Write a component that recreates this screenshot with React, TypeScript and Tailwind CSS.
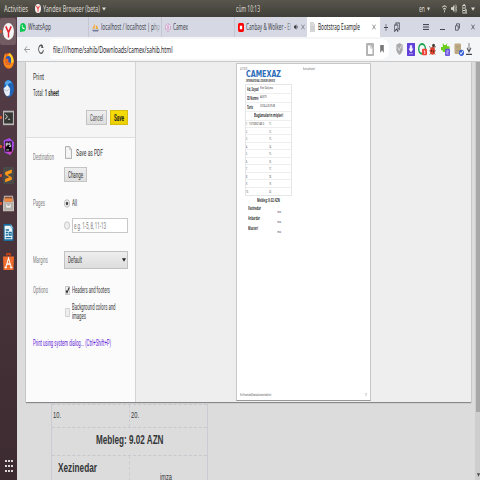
import React, { useLayoutEffect, useRef, useState } from "react";

// Condenses a single line of text to the width of its box.
function Fit({ className = "", children }: { className?: string; children: React.ReactNode }) {
  const box = useRef<HTMLDivElement>(null);
  const inner = useRef<HTMLSpanElement>(null);
  const [scale, setScale] = useState(0.56);
  useLayoutEffect(() => {
    if (box.current && inner.current && inner.current.offsetWidth) {
      const natural = parseFloat(getComputedStyle(inner.current).width);
      const wanted = parseFloat(getComputedStyle(box.current).width);
      setScale(wanted / natural);
    }
  }, []);
  return (
    <div ref={box} className={`shrink-0 whitespace-nowrap ${className}`}>
      <span ref={inner} className="inline-block origin-left align-top" style={{ transform: `scaleX(${scale})` }}>
        {children}
      </span>
    </div>
  );
}

function Ico({ className = "", box = "0 0 20 20", children }: { className?: string; box?: string; children: React.ReactNode }) {
  return (
    <svg className={`block shrink-0 ${className}`} viewBox={box} preserveAspectRatio="none" fill="none">
      {children}
    </svg>
  );
}

function TopBar() {
  return (
    <div className="flex h-[17px] shrink-0 items-center bg-linear-to-b from-[#58564c] to-[#3f3e39] text-[8.5px] leading-[12px] text-[#dfdbd2]">
      <Fit className="ml-[4px] w-[24px]">Activities</Fit>
      <Ico className="ml-[7px] h-[9px] w-[6px]">
        <ellipse cx="10" cy="10" rx="10" ry="10" fill="#f4f0ee" />
        <path d="M5 4l5 7v6M15 4l-5 7" stroke="#e33" strokeWidth="3" />
      </Ico>
      <Fit className="ml-[2px] w-[57px]">Yandex Browser (beta)</Fit>
      <Ico className="ml-[2px] h-[4px] w-[4px]"><path d="M0 2h20L10 19z" fill="#dfdbd2" /></Ico>
      <Fit className="ml-[130px] w-[24px]">cüm 10:13</Fit>
      <Fit className="ml-[159px] w-[6px]">en</Fit>
      <Ico className="ml-[2px] h-[4px] w-[3px]"><path d="M0 2h20L10 19z" fill="#dfdbd2" /></Ico>
      <Ico className="ml-[12px] h-[8px] w-[5px]">
        <path d="M1 6q9-8 18 0M5 11q5-5 10 0M10 12v7" stroke="#d4d0c8" strokeWidth="3" />
      </Ico>
      <Ico className="ml-[4px] h-[9px] w-[6px]">
        <path d="M0 7h5l6-6v18l-6-6H0z" fill="#d8d5cd" />
        <path d="M13 5q4 5 0 10M16 1q6 9 0 18" stroke="#c8c4bc" strokeWidth="2" />
      </Ico>
      <Ico className="ml-[5px] h-[10px] w-[5px]">
        <path d="M3 3h10v15H3zM6 1h5M4 8h8M4 13h8M15 12h4v6h-4" stroke="#d8d5cd" strokeWidth="2.4" />
      </Ico>
      <Ico className="ml-[4px] h-[4px] w-[4px]"><path d="M0 2h20L10 19z" fill="#dfdbd2" /></Ico>
    </div>
  );
}

function DockItem({ running = false, active = false, children }: { running?: boolean; active?: boolean; children: React.ReactNode }) {
  return (
    <div className="flex h-[28.75px] items-center">
      <div className={`flex h-[27px] w-[16px] items-center rounded-[2px] ${active ? "bg-[#715d62]" : ""}`}>
        <div className={`h-[3px] w-[2px] rounded-r-[1px] ${running ? "bg-[#d9532a]" : ""}`} />
        <Ico className="ml-[1px] h-[17px] w-[11px]">{children}</Ico>
      </div>
    </div>
  );
}

function Dock() {
  return (
    <div className="flex w-[17px] shrink-0 flex-col bg-linear-to-b from-[#563f48] via-[#49333b] to-[#3c2b31]">
      <DockItem running active>
        <ellipse cx="10" cy="10" rx="10" ry="10" fill="#f5f3f3" />
        <path d="M5 4l5 7v6M15 4l-5 7" stroke="#e3202b" strokeWidth="2.6" />
      </DockItem>
      <DockItem>
        <circle cx="10" cy="10.5" r="9.3" fill="#f0611c" />
        <path d="M2 6L4 1l2 4q5-5 9-1 6 4 4 10-3 6-9 5Q2 18 1 11z" fill="#ff8a16" />
        <path d="M12 1q8 5 7 11l-4 1q1-7-5-9z" fill="#ffd22c" />
        <circle cx="9.5" cy="10" r="5.2" fill="#2b55b5" />
        <path d="M3 9q4-3 7 0-2 3 4 4-4 4-8 1z" fill="#f46a1d" />
      </DockItem>
      <DockItem>
        <ellipse cx="10.5" cy="10" rx="9.5" ry="10" fill="#1e64b8" />
        <path d="M3 3q7-6 14 1-8-2-10 5z" fill="#54a6e8" />
        <path d="M1 10l7-4 5 4-1 8-5 1q-5-2-6-9z" fill="#e9eef4" />
        <path d="M2 11l5 2 5-3" stroke="#98abc5" />
      </DockItem>
      <DockItem running>
        <rect x="0" y="2" width="20" height="17" fill="#b9b8b5" />
        <rect x="2" y="4" width="16" height="13" fill="#353735" />
        <path d="M4 6l4 3-4 3M9 12h4" stroke="#ccc" strokeWidth="1.2" />
      </DockItem>
      <DockItem running>
        <path d="M1 3L12 0l8 5-1 9-6 6-10-3z" fill="#a64be9" />
        <path d="M0 11l8-8 10 12-5 5z" fill="#d346bb" />
        <rect x="4" y="4" width="12" height="12" fill="#0d0910" />
        <path d="M6 10V6h3v2H6M14 6h-3v2h3v2h-3M6 14h5" stroke="#fff" strokeWidth="1.1" />
      </DockItem>
      <DockItem running>
        <rect width="20" height="20" rx="2" fill="#4a4b48" />
        <path d="M16 3v4L8 9l8 3v3L4 18v-4l8-2-8-3V6z" fill="#ff9818" />
      </DockItem>
      <DockItem running>
        <path d="M2 1h16l2 8v10H0V9z" fill="#c8c3bd" />
        <path d="M3 2h14v6H3z" fill="#8b5138" />
        <path d="M3 4h14v4H3z" fill="#f18c43" />
        <path d="M2 9h16v9H2z" fill="#b4b0aa" />
        <path d="M7 11v3h6v-3" stroke="#fff" strokeWidth="1.5" />
      </DockItem>
      <DockItem>
        <path d="M1 0h13l5 5v15H1z" fill="#166d9c" />
        <path d="M3 2h10l4 4v12H3z" fill="#eef6fa" />
        <path d="M14 0v5h5" fill="#8ec8e5" />
        <path d="M5 7h6M5 10h4M5 13h4M5 16h10M11 10h4v3h-4z" stroke="#166d9c" strokeWidth="1.7" />
      </DockItem>
      <DockItem>
        <path d="M7 4V1h6v3" stroke="#d24416" strokeWidth="2" />
        <path d="M0 4h20l-1 16H1z" fill="#ee6c2d" />
        <path d="M5 17l5-11 5 11M7 13h6M3 17h4M13 17h4" stroke="#fff" strokeWidth="1.7" />
      </DockItem>
      <div className="mt-auto mb-[8px] ml-[5px] grid w-[8px] grid-cols-3 gap-x-[1.5px] gap-y-[3px]">
        {Array.from({ length: 9 }, (_, i) => (
          <div key={i} className="h-[2px] w-[1.5px] bg-[#dcd8da]" />
        ))}
      </div>
    </div>
  );
}

const cross = <path d="M2 2l16 16M18 2L2 18" stroke="currentColor" strokeWidth="2.8" />;

function Tabs() {
  return (
    <div className="flex h-[20px] shrink-0 items-center bg-[#d6d9e4] text-[8px] leading-[12px] text-[#41434a]">
      <div className="flex h-full w-[72px] items-center border-r border-[#c4c7d1]">
        <Ico className="ml-[3px] h-[9px] w-[6px]">
          <path d="M0 20V9Q1 0 10 0t10 10q-1 10-10 9z" fill="#0bc551" />
          <path d="M6 5q-1 9 9 9v-3l-3-1-2 1-2-3 1-1-1-3z" fill="#fff" />
        </Ico>
        <Fit className="ml-[2px] w-[23px]">WhatsApp</Fit>
      </div>
      <div className="flex h-full w-[73px] items-center border-r border-[#c4c7d1]">
        <Ico className="ml-[3px] h-[9px] w-[7px]">
          <path d="M8 1v12H1zM11 4q6 4 7 10l-7-1z" fill="#f4ac35" />
          <path d="M0 15h20l-3 4H3z" fill="#777e9c" />
        </Ico>
        <Fit className="ml-[2px] w-[59px]">localhost / localhost | p<span className="text-[#777a84]">h</span><span className="text-[#a5a8b3]">p</span></Fit>
      </div>
      <div className="flex h-full w-[73px] items-center border-r border-[#c4c7d1]">
        <Ico className="ml-[3px] h-[9px] w-[6px]">
          <circle cx="10" cy="10" r="8" fill="#f4e8f3" stroke="#bd7ab4" strokeWidth="2" strokeDasharray="7 2" />
          <path d="M10 5v10" stroke="#a963b1" strokeWidth="2" />
        </Ico>
        <Fit className="ml-[2px] w-[15px]">Camex</Fit>
      </div>
      <div className="flex h-full w-[72px] items-center">
        <Ico className="ml-[3px] h-[9px] w-[6px]">
          <rect width="20" height="20" rx="5" fill="#f00" />
          <path d="M6 6h8v8H6z" fill="#fff" />
        </Ico>
        <Fit className="ml-[2px] w-[45px]">Canbay &amp; Wolker - <span className="text-[#777a84]">E</span><span className="text-[#a5a8b3]">l</span></Fit>
        <Ico className="ml-[3px] h-[6px] w-[4px]"><path d="M0 6h5l7-5v18l-7-5H0z" fill="#41434a" /><path d="M16 6v8" stroke="#41434a" strokeWidth="3" /></Ico>
        <Ico className="ml-[3px] h-[6px] w-[4px] text-[#73757d]">{cross}</Ico>
      </div>
      <div className="flex h-full w-[73px] items-center bg-white text-[#222]">
        <Ico className="ml-[3px] h-[10px] w-[5px]">
          <path d="M1 1h12l6 5v13H1z" fill="#ddd" stroke="#aaa" />
          <path d="M4 9h12M4 12h12M4 15h12" stroke="#aaa" />
        </Ico>
        <Fit className="ml-[3px] w-[42px]">Bootstrap Example</Fit>
        <Ico className="ml-[12px] h-[6px] w-[4px] text-[#777]">{cross}</Ico>
      </div>
      <Ico className="ml-[4px] h-[7px] w-[4px]"><path d="M10 0v20M0 10h20" stroke="#444750" strokeWidth="3" /></Ico>
      <Ico className="ml-[6px] h-[10px] w-[6px]">
        <path d="M6 5V2h12v13l-3-2M2 6h11v13l-5-5-6 5z" stroke="#444750" strokeWidth="2.2" />
      </Ico>
      <Ico className="ml-[23px] h-[6px] w-[6px]"><path d="M0 2h20M0 10h20M0 18h20" stroke="#33353b" strokeWidth="3.2" /></Ico>
      <div className="mt-[4px] ml-[11px] h-[1px] w-[5px] bg-[#444750]" />
      <Ico className="ml-[10px] h-[8px] w-[5px]"><path d="M6 6V2h12v11h-4M2 7h11v11H2z" stroke="#444750" strokeWidth="2.4" /></Ico>
      <Ico className="ml-[11px] h-[6px] w-[4px] text-[#444750]">{cross}</Ico>
    </div>
  );
}

function Toolbar() {
  return (
    <div className="flex h-[24px] shrink-0 items-center bg-[#f5f6f8]">
      <Ico className="ml-[7px] h-[7px] w-[6px]"><path d="M10 1L2 10l8 9M2 10h18" stroke="#888b90" strokeWidth="2.5" /></Ico>
      <Ico className="ml-[8px] h-[10px] w-[6px]">
        <path d="M16 5A8 8 0 1 0 18 12" stroke="#55585d" strokeWidth="2.8" />
        <path d="M11 0v8h8z" fill="#55585d" />
      </Ico>
      <div className="ml-[6px] flex h-[20px] w-[339px] items-center rounded-r-[7px] rounded-l-[3px] bg-white">
        <Fit className="ml-[3px] w-[119.5px] text-[8.5px] leading-[13px] text-[#26232a]">file:///home/sahib/Downloads/camex/sahib.html</Fit>
        <Ico className="ml-[193px] h-[13px] w-[8px]">
          <rect width="20" height="20" rx="2" fill="#b4b4b4" />
          <path d="M5 4h7l4 4v9H5z" fill="#fff" />
          <path d="M12 4v4h4" stroke="#b4b4b4" strokeWidth="1.4" />
        </Ico>
        <Ico className="ml-[6px] h-[8px] w-[4px]"><path d="M1 0h18v20l-9-7-9 7z" fill="#77777a" /></Ico>
      </div>
      <Ico className="ml-[7px] h-[12px] w-[7px]">
        <path d="M10 0l9 3v9q-2 5-9 8-7-3-9-8V3z" fill="#aaa" />
        <path d="M5 7l4 5 7-8" stroke="#ddd" strokeWidth="2" />
      </Ico>
      <Ico className="ml-[4px] h-[13px] w-[8px]">
        <rect width="20" height="20" rx="1" fill="#6040d8" />
        <path d="M8 4h4v5h3l-5 5-5-5h3zM5 16.5h10" fill="#fff" stroke="#fff" />
      </Ico>
      <Ico className="ml-[3px] h-[13px] w-[9px]">
        <circle cx="9" cy="9" r="7.5" stroke="#17a34b" strokeWidth="3" />
        <rect x="9" y="9" width="11" height="10" rx="2" fill="#ef4136" />
        <path d="M13 12h2v5" stroke="#fff" strokeWidth="1.4" />
      </Ico>
      <Ico className="ml-[2px] h-[13px] w-[7px]">
        <path d="M1 5l5 4M19 5l-5 4M0 12h20M2 18l5-4M18 18l-5-4" stroke="#705146" strokeWidth="1.4" />
        <ellipse cx="10" cy="12" rx="7" ry="6" fill="#e0402a" />
        <ellipse cx="13" cy="4" rx="4" ry="3" fill="#4a3935" />
        <circle cx="7" cy="12" r="1.8" fill="#60261f" />
        <circle cx="13" cy="13" r="1.8" fill="#60261f" />
      </Ico>
      <Ico className="ml-[5px] h-[13px] w-[9px]">
        <path d="M4 0l3 3h4l3-3-1 5h6v5h-3v4H4v-3H0V6h4z" fill="#6bd01b" />
        <rect x="9" y="9" width="11" height="11" rx="2" fill="#6b55df" />
        <path d="M12 12h4v2h-3v3h4" stroke="#d5ccff" strokeWidth="1.3" />
      </Ico>
      <Ico className="ml-[4px] h-[14px] w-[10px]">
        <rect x="1" y="2" width="13" height="15" rx="2" fill="#bca884" />
        <path d="M4 7h7M4 12h7" stroke="#a5946f" />
        <ellipse cx="15" cy="15.5" rx="5" ry="4.5" fill="#315bd3" />
        <path d="M12 15l2 2 4-4" stroke="#fff" strokeWidth="1.5" />
      </Ico>
      <Ico className="ml-[2px] h-[12px] w-[6px]"><path d="M10 0v14M3 8l7 7 7-7M0 19h20" stroke="#44474d" strokeWidth="2.2" /></Ico>
    </div>
  );
}

function Label({ children, className }: { children: React.ReactNode; className: string }) {
  return <Fit className={`text-[#7d7d7d] ${className}`}>{children}</Fit>;
}

const button = "flex items-center justify-center border border-[#c4c4c4] bg-linear-to-b from-[#eee] to-[#dedede]";

function PrintPanel() {
  return (
    <div className="flex h-full w-[110px] shrink-0 flex-col border-r border-[#d4d4d4] bg-[#fbfbfb] pl-[7px] font-[Roboto,sans-serif] text-[8.3px] leading-[10px] text-[#333]">
      <div className="-ml-[7px] flex h-[76px] shrink-0 flex-col border-b border-[#dedede] bg-[#f5f5f5] pt-[10px] pl-[7px]">
        <Fit className="w-[11px] text-[8.8px]">Print</Fit>
        <Fit className="mt-[6px] w-[26px]">Total: <b>1 sheet</b></Fit>
        <div className="mt-[12px] ml-[53px] flex gap-[3px]">
          <div className={`h-[15px] w-[21px] ${button}`}><Fit className="w-[13px] text-[#555]">Cancel</Fit></div>
          <div className="flex h-[15px] w-[18px] items-center justify-center border border-[#d8bd10] bg-linear-to-b from-[#f6dd08] to-[#ecd000]"><Fit className="w-[10px] font-bold text-[#222]">Save</Fit></div>
        </div>
      </div>
      <div className="flex h-[29px] shrink-0 items-center">
        <Label className="mt-[8px] w-[21px]">Destination</Label>
        <Ico className="mb-[1px] ml-[11px] h-[13px] w-[7px]"><path d="M1 1h12l6 5v13H1z" fill="#f5f5f5" stroke="#8d8d8d" strokeWidth="1.5" /><path d="M13 1v5h6" stroke="#aaa" /></Ico>
        <Fit className="ml-[4px] w-[27px] text-[8.8px]">Save as PDF</Fit>
      </div>
      <div className={`ml-[31px] h-[15px] w-[23px] shrink-0 ${button}`}><Fit className="w-[15px]">Change</Fit></div>
      <div className="mt-[16px] flex h-[10px] shrink-0 items-center">
        <Label className="w-[12px]">Pages</Label>
        <Ico className="ml-[19px] h-[9px] w-[6px]"><circle cx="10" cy="10" r="8.5" fill="#eee" stroke="#aaa" strokeWidth="2" /><circle cx="10" cy="10" r="4" fill="#444" /></Ico>
        <Fit className="ml-[2px] w-[5px]">All</Fit>
      </div>
      <div className="mt-[10px] flex h-[15px] shrink-0 items-center">
        <Ico className="ml-[31px] h-[9px] w-[6px]"><circle cx="10" cy="10" r="8.5" fill="#eee" stroke="#bbb" strokeWidth="2" /></Ico>
        <div className="ml-[2px] flex h-[15px] w-[56px] items-center border border-[#c8c8c8] bg-white"><Fit className="ml-[1px] w-[32px] text-[#777]">e.g. 1-5, 8, 11-13</Fit></div>
      </div>
      <div className="mt-[18px] flex h-[18px] shrink-0 items-center">
        <Label className="w-[15px]">Margins</Label>
        <div className="ml-[16px] flex h-[18px] w-[64px] items-center border border-[#c1c1c1] bg-linear-to-b from-[#eee] to-[#ddd]">
          <Fit className="ml-[3px] w-[14px]">Default</Fit>
          <Ico className="ml-[40px] h-[4px] w-[4px]"><path d="M0 1h20L10 19z" fill="#222" /></Ico>
        </div>
      </div>
      <div className="mt-[16px] flex h-[10px] shrink-0 items-center">
        <Label className="w-[15px]">Options</Label>
        <Ico className="ml-[17px] h-[9px] w-[5px]"><rect x="1" y="1" width="18" height="18" rx="2" fill="#eee" stroke="#aaa" strokeWidth="2" /><path d="M4 10l4 5 9-12" stroke="#222" strokeWidth="3.5" /></Ico>
        <Fit className="ml-[2px] w-[38px]">Headers and footers</Fit>
      </div>
      <div className="mt-[8px] flex h-[18px] shrink-0 items-center">
        <Ico className="ml-[32px] h-[9px] w-[5px]"><rect x="1" y="1" width="18" height="18" rx="2" fill="#eee" stroke="#bbb" strokeWidth="2" /></Ico>
        <div className="ml-[2px] leading-[9px]">
          <Fit className="w-[43.5px]">Background colors and</Fit>
          <Fit className="w-[14px]">images</Fit>
        </div>
      </div>
      <Fit className="mt-[17px] w-[78px] text-[#6320d7]">Print using system dialog... (Ctrl+Shift+P)</Fit>
    </div>
  );
}

function MetaRow({ name, children }: { name: string; children: React.ReactNode }) {
  return (
    <div className="flex h-[9px] border-b border-[#eee]">
      <div className="ml-[1px] w-[13px] pt-[2px] text-[4.5px] font-bold">{name === "Tarix" ? <Fit className="w-[6px]">{name}</Fit> : <Fit className="w-[11.5px]">{name}</Fit>}</div>
      <div>{children}</div>
    </div>
  );
}

function SignRow({ children }: { children: React.ReactNode }) {
  return (
    <div className="flex h-[9.7px] justify-between pr-[89px] text-[5px] font-bold">
      {children}
      <Fit className="mt-[3px] w-[4px] text-[4px] font-normal">imza</Fit>
    </div>
  );
}

function PreviewPage() {
  return (
    <div className="mt-[1px] ml-[100px] flex h-[338px] w-[135px] shrink-0 flex-col border border-[#c7c7c7] border-b-[#999] bg-white pl-[3px] text-[4px] leading-[5px] text-[#333]">
      <div className="mt-[2px] flex h-[5px] shrink-0 items-center text-[3px] leading-[4px] text-[#555]">
        <Fit className="w-[7px]">4/27/2018</Fit>
        <Fit className="ml-[56px] w-[12px]">Bootstrap Example</Fit>
      </div>
      <div className="ml-[6px] flex h-[8px] shrink-0 items-center"><Fit className="w-[35px] font-['DejaVu_Sans',sans-serif] text-[8px] leading-[8px] font-bold text-[#2a6cb8]">CAMEXAZ</Fit></div>
      <Fit className="ml-[6px] w-[29px] text-[2.8px] leading-[4px] font-bold italic">INTERNATIONAL COURIER SERVICE</Fit>
      <div className="mt-[1px] ml-[5px] w-[47px] shrink-0 border border-[#e6e6e6]">
        <MetaRow name="Ad, Soyad"><Fit className="w-[13px]">Elite Quliyeva</Fit></MetaRow>
        <MetaRow name="ID Nomre"><Fit className="w-[6.5px]">A5379</Fit></MetaRow>
        <MetaRow name="Tarix"><Fit className="w-[15px]">2018-4-26 09:38</Fit></MetaRow>
        <div className="flex h-[8.5px] items-center justify-center border-b border-[#eee]"><Fit className="w-[29px] text-[5px] font-bold">Baglanalarin mişləri</Fit></div>
        {Array.from({ length: 10 }, (_, i) => (
          <div key={i} className="flex h-[7.47px] items-center border-b border-[#eee] text-[3.5px] last:border-b-0">
            <div className="w-[3px]"><Fit className={i === 9 ? "w-[2.5px]" : "w-[1.6px]"}>{`${i + 1}.`}</Fit></div>
            <div className="w-[19.5px]">{i === 0 && <Fit className="w-[15px]">1370063148 0</Fit>}</div>
            <Fit className="w-[2.5px]">{`${i + 11}.`}</Fit>
          </div>
        ))}
      </div>
      <Fit className="mt-[1px] ml-[17px] w-[23px] text-[5px] leading-[6px] font-bold">Mebleg: 9.02 AZN</Fit>
      <div className="mt-[3px] ml-[8px] flex flex-col">
        <SignRow><Fit className="w-[13px]">Xezinedar</Fit></SignRow>
        <SignRow><Fit className="w-[12px]">Anbardar</Fit></SignRow>
        <SignRow><Fit className="w-[10px]">Musteri</Fit></SignRow>
      </div>
      <div className="mt-auto mb-[3px] flex justify-between pr-[3px] text-[3px] leading-[4px]">
        <Fit className="w-[31px]">file:///home/sahib/Downloads/camex/sahib.html</Fit>
        <Fit className="w-[2px]">1/1</Fit>
      </div>
    </div>
  );
}

function PageTable() {
  return (
    <div className="mt-[2px] ml-[34px] flex w-[157px] flex-col border-x border-[#cbccd1] font-['Liberation_Sans',sans-serif] text-[#343638]">
      <div className="flex h-[24px] shrink-0 border-y border-dashed border-[#c7c8ce] text-[9.5px] leading-[12px]">
        <div className="w-[78px] border-r border-dashed border-[#cbccd1] pt-[4px] pl-[1px]"><Fit className="w-[8px]">10.</Fit></div>
        <div className="pt-[4px] pl-[1px]"><Fit className="w-[8px]">20.</Fit></div>
      </div>
      <div className="flex h-[28px] shrink-0 items-center justify-center border-b border-dashed border-[#c7c8ce] pb-[4px] text-[13px] leading-[16px] font-bold"><Fit className="w-[67.5px]">Mebleg: 9.02 AZN</Fit></div>
      <div className="flex h-[25px] shrink-0">
        <div className="w-[78px] border-r border-dashed border-[#cbccd1] pt-[4px] pl-[6px] text-[13px] leading-[16px] font-bold"><Fit className="w-[39px]">Xezinedar</Fit></div>
        <div className="pt-[15px] pl-[30px] text-[9.5px] leading-[12px]"><Fit className="w-[12px]">imza</Fit></div>
      </div>
    </div>
  );
}

export default function App() {
  return (
    <div className="flex h-[480px] w-[480px] flex-col overflow-hidden bg-[#dcdcdc] font-['Noto_Sans','Open_Sans',sans-serif]">
      <TopBar />
      <div className="flex h-[463px]">
        <Dock />
        <div className="flex w-[463px] flex-col">
          <Tabs />
          <Toolbar />
          <div className="flex h-[419px] border-t border-[#c9c9c9]">
            <div className="h-[418px] w-[458px] overflow-hidden">
              <div className="ml-[9px] flex h-[340px] w-[445px] bg-[#eee] shadow-[0_1px_1px_#888,0_0_1px_#aaa]">
                <PrintPanel />
                <PreviewPage />
              </div>
              <PageTable />
            </div>
            <div className="flex w-[5px] flex-col items-center bg-[#cecece] pl-[1px]">
              <div className="h-[350px] w-[4px] bg-[#a7a7a7]" />
              <Ico className="mt-auto mb-[3px] h-[4px] w-[3px]"><path d="M0 1h20L10 19z" fill="#444" /></Ico>
            </div>
          </div>
        </div>
      </div>
    </div>
  );
}
